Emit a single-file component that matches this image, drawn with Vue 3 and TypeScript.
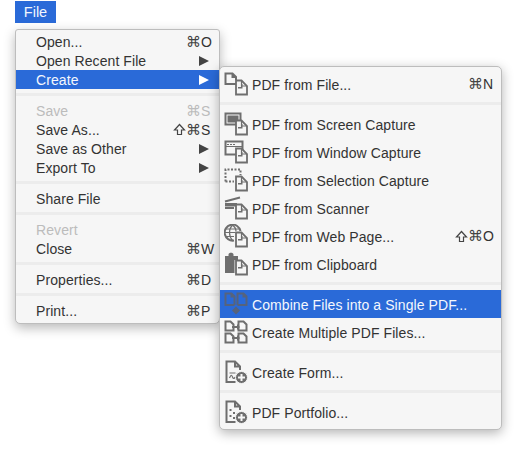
<script setup lang="ts">
interface MenuRow {
  label?: string
  key?: string
  shift?: boolean
  arrow?: boolean
  disabled?: boolean
  active?: boolean
  sep?: boolean
}

interface SubRow {
  label?: string
  key?: string
  shift?: boolean
  active?: boolean
  sep?: boolean
  icon?: string
  badge?: 'pdf' | 'plus' | 'none'
}

const fileMenu: MenuRow[] = [
  { label: 'Open...', key: 'O' },
  { label: 'Open Recent File', arrow: true },
  { label: 'Create', arrow: true, active: true },
  { sep: true },
  { label: 'Save', key: 'S', disabled: true },
  { label: 'Save As...', key: 'S', shift: true },
  { label: 'Save as Other', arrow: true },
  { label: 'Export To', arrow: true },
  { sep: true },
  { label: 'Share File' },
  { sep: true },
  { label: 'Revert', disabled: true },
  { label: 'Close', key: 'W' },
  { sep: true },
  { label: 'Properties...', key: 'D' },
  { sep: true },
  { label: 'Print...', key: 'P' },
]

const createMenu: SubRow[] = [
  { label: 'PDF from File...', key: 'N', icon: 'file', badge: 'pdf' },
  { sep: true },
  { label: 'PDF from Screen Capture', icon: 'screen', badge: 'pdf' },
  { label: 'PDF from Window Capture', icon: 'window', badge: 'pdf' },
  { label: 'PDF from Selection Capture', icon: 'selection', badge: 'pdf' },
  { label: 'PDF from Scanner', icon: 'scanner', badge: 'pdf' },
  { label: 'PDF from Web Page...', key: 'O', shift: true, icon: 'web', badge: 'pdf' },
  { label: 'PDF from Clipboard', icon: 'clipboard', badge: 'pdf' },
  { sep: true },
  { label: 'Combine Files into a Single PDF...', active: true, icon: 'combine', badge: 'none' },
  { label: 'Create Multiple PDF Files...', icon: 'multiple', badge: 'none' },
  { sep: true },
  { label: 'Create Form...', icon: 'form', badge: 'plus' },
  { sep: true },
  { label: 'PDF Portfolio...', icon: 'portfolio', badge: 'plus' },
]

// stroke = outlined part, solid = filled part, thin = fine detail, dash = dotted frame
const icons: Record<string, { stroke?: string; solid?: string; thin?: string; dash?: string }> = {
  file: { stroke: 'M12 12H1.5V1.5h7L12 5v3M8.5 1.5V5H12' },
  screen: {
    stroke: 'M1.5 1.5h15v11h-15z',
    solid: 'M3.5 3.5h11v7h-11z',
  },
  window: {
    stroke: 'M1.5 1.5h17v13h-17z',
    thin: 'M3 4.5h2M6 4.5h2M9 4.5h2M2 6.5h16',
  },
  selection: { dash: 'M1.5 13.5V1.5h15V7M1.5 13.5H10' },
  scanner: { stroke: 'M1 5.5L16 1.5M1 12h9', solid: 'M1 7h12v3.5H1z' },
  web: {
    stroke: 'M10 16.5A8 8 0 1 1 16.5 7',
    thin: 'M8.5 1c-4 4-4 11 0 15.5M8.5 1c2.5 2 3.5 4 3.5 6M1 8.5h10M2 5h13M2 12.5h8',
  },
  clipboard: { solid: 'M1 4h3.5V2.5C4.5 0 9.5 0 9.5 2.5V4H14v4h-3.5v13H1z' },
  combine: {
    stroke: 'M10.5 13h-9V1.5h6l3 3V13M13.5 13h9V4.5l-3-3h-6V13M7.5 1.5v3h3M19.5 1.5v3h3',
    solid: 'M12 14.5l4 4-4 4-4-4z',
  },
  multiple: {
    stroke: 'M1.5 10.5v-9h5l3 3v6zM14.5 10.5v-9h5l3 3v6zM1.5 22.5v-9h5l3 3v6zM14.5 22.5v-9h5l3 3v6z',
    solid: 'M8 6h5V4l3 3-3 3V8H8zM8 17h5v-2l3 3-3 3v-2H8z',
  },
  form: {
    stroke: 'M11.5 22h-9V1.5H11l5 5V10M11 1.5v5h5',
    thin: 'M5.5 13h6M5.5 18c1.5-3.5 2-3.5 3-1s1.5 1.5 3 0',
  },
  portfolio: {
    stroke: 'M11.5 22h-9V1.5H11l5 5V10M11 1.5v5h5',
    solid: 'M5.5 9h2v2h-2zM9 12h2v2H9zM5.5 15h2v2h-2zM9 17h2v2H9z',
  },
}
</script>

<template>
  <div class="stage">
    <div class="menubar"><span class="file-tab">File</span></div>
    <div class="menu-wrap">
      <ul class="menu main">
        <template v-for="(row, i) in fileMenu" :key="i">
          <li v-if="row.sep" class="sep"></li>
          <li v-else class="row" :class="{ disabled: row.disabled, active: row.active }">
            <span class="label">{{ row.label }}</span>
            <span v-if="row.key" class="keys">
              <svg v-if="row.shift" class="shift" viewBox="0 0 13 13" width="13" height="13">
                <path d="M6.5 1.5L1.5 7h3v4.5h4V7h3z" />
              </svg>
              <span class="mod">⌘</span><span class="key">{{ row.key }}</span>
            </span>
            <span v-if="row.arrow" class="arrow"></span>
          </li>
        </template>
      </ul>

      <ul class="menu sub">
        <template v-for="(row, i) in createMenu" :key="i">
          <li v-if="row.sep" class="sep"></li>
          <li v-else class="row" :class="{ active: row.active }">
            <svg class="icon" viewBox="0 0 24 24" width="24" height="24">
              <path v-if="row.icon && icons[row.icon].solid" class="ic-solid" :d="icons[row.icon].solid" />
              <path v-if="row.icon && icons[row.icon].stroke" class="ic-line" :d="icons[row.icon].stroke" />
              <path v-if="row.icon && icons[row.icon].thin" class="ic-thin" :d="icons[row.icon].thin" />
              <path v-if="row.icon && icons[row.icon].dash" class="ic-dash" :d="icons[row.icon].dash" />
              <g v-if="row.badge === 'pdf'">
                <path class="ic-doc" d="M12 22.5V8.5h5.5l5.5 5.5v8.5z" />
                <path class="ic-thin" d="M17.5 8.5V14H23" />
                <path class="ic-solid" d="M14 15h3v-3h1.5v4.5H14z" />
              </g>
              <g v-if="row.badge === 'plus'">
                <circle class="ic-badge" cx="17.5" cy="17.5" r="6" />
                <path class="ic-plus" d="M17.5 14v7M14 17.5h7" />
              </g>
            </svg>
            <span class="label">{{ row.label }}</span>
            <span v-if="row.key" class="keys">
              <svg v-if="row.shift" class="shift" viewBox="0 0 13 13" width="13" height="13">
                <path d="M6.5 1.5L1.5 7h3v4.5h4V7h3z" />
              </svg>
              <span class="mod">⌘</span><span class="key">{{ row.key }}</span>
            </span>
          </li>
        </template>
      </ul>
    </div>
  </div>
</template>

<style>
html,
body {
  background: #fff;
}
</style>

<style scoped>
.stage {
  width: 516px;
  height: 449px;
  overflow: hidden;
  font-family: "Liberation Sans", Arial, sans-serif;
  font-size: 14px;
  color: #333;
  position: relative;
}
.menubar {
  padding: 1px 0 0 15px;
  height: 29px;
  box-sizing: border-box;
}
.file-tab {
  display: block;
  width: 41px;
  height: 22px;
  line-height: 22px;
  text-align: center;
  background: #2a6ad8;
  color: #f2f6fd;
  font-size: 14.5px;
}
.menu-wrap {
  position: relative;
  margin-left: 15px;
  width: 205px;
}
ul {
  list-style: none;
  margin: 0;
}
.menu {
  background: #f6f6f6;
  border: 1px solid #bdbdbd;
  box-sizing: border-box;
}
.main {
  width: 205px;
  height: 295px;
  padding: 2px 0 0;
  border-radius: 3px 3px 5px 5px;
  box-shadow: 0 4px 12px rgba(0, 0, 0, 0.28);
}
.main .row {
  height: 19px;
  padding: 0 5px 0 20px;
}
.main .sep {
  height: 12px;
}
.row {
  display: flex;
  align-items: center;
  letter-spacing: 0.08px;
}
.label {
  flex: 1;
  white-space: nowrap;
}
.active {
  background: #2a6ad8;
  color: #f4f7fd;
}
.disabled {
  color: #bcbcbc;
}
.sep {
  position: relative;
}
.sep::after {
  content: "";
  position: absolute;
  left: 0;
  right: 0;
  top: 50%;
  height: 3px;
  margin-top: -2px;
  background: #ececec;
}
.keys {
  display: flex;
  align-items: center;
  justify-content: flex-end;
}
.mod {
  width: 15px;
  text-align: center;
  font-family: "DejaVu Sans", sans-serif;
  font-size: 15px;
  letter-spacing: 0;
  color: #444;
}
.shift {
  fill: none;
  stroke: #444;
  stroke-width: 1.2;
}
.disabled .mod {
  color: #bcbcbc;
}
.key {
  width: 13px;
  font-size: 14px;
  letter-spacing: 0;
}
.arrow {
  width: 0;
  height: 0;
  margin-right: 5px;
  border-left: 10px solid #444;
  border-top: 5px solid transparent;
  border-bottom: 5px solid transparent;
}
.active .arrow {
  border-left-color: #fff;
}
.sub {
  position: absolute;
  left: 204px;
  top: 37px;
  width: 283px;
  height: 364px;
  padding: 3px 0 0;
  border-radius: 5px;
  box-shadow: 0 3px 12px rgba(0, 0, 0, 0.3);
}
.sub .row {
  height: 28px;
  padding: 0 5px 0 4px;
}
.sub .sep {
  height: 12px;
}
.sub .row .label {
  padding-top: 2px;
}
.icon {
  flex: none;
  margin-right: 4px;
}
.ic-line {
  fill: none;
  stroke: #6e6e6e;
  stroke-width: 2;
}
.ic-thin {
  fill: none;
  stroke: #6e6e6e;
  stroke-width: 1.2;
}
.ic-dash {
  fill: none;
  stroke: #6e6e6e;
  stroke-width: 2;
  stroke-dasharray: 2 1.5;
}
.ic-solid {
  fill: #6e6e6e;
}
.ic-doc {
  fill: #f6f6f6;
  stroke: #6e6e6e;
  stroke-width: 1.8;
}
.ic-badge {
  fill: #6e6e6e;
  stroke: #f6f6f6;
  stroke-width: 1;
}
.ic-plus {
  fill: none;
  stroke: #f6f6f6;
  stroke-width: 2;
}
.active .ic-line,
.active .ic-thin {
  stroke: #56637c;
}
.active .ic-solid {
  fill: #56637c;
}
</style>
